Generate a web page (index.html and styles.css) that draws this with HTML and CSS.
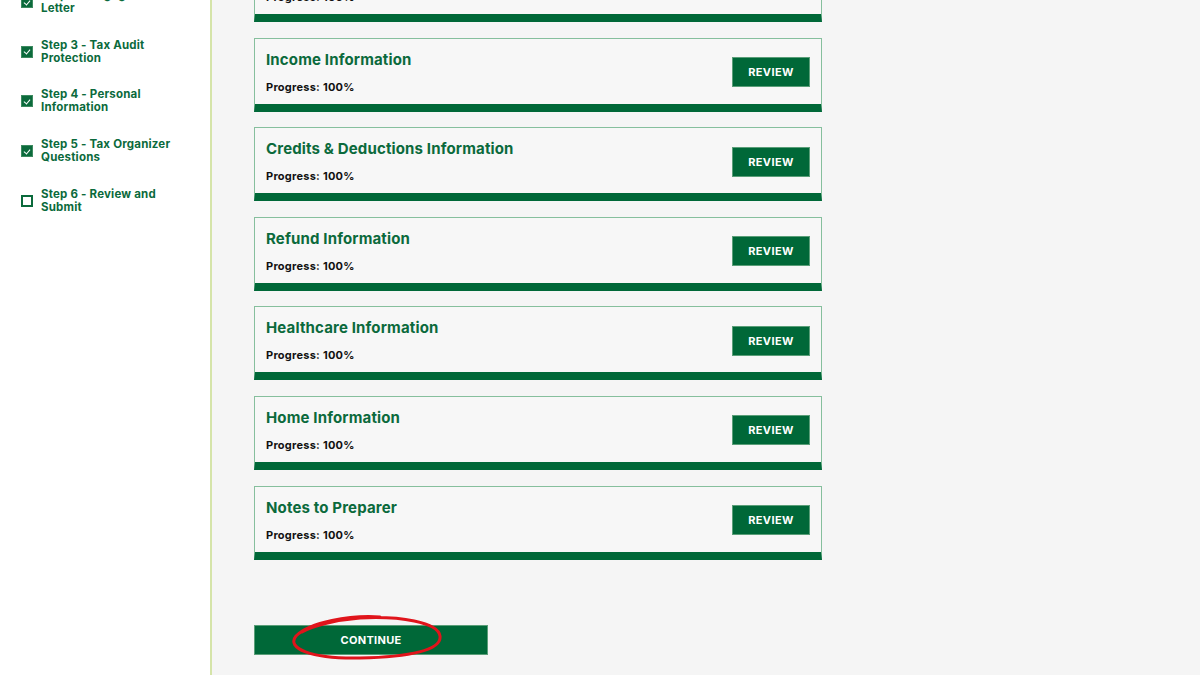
FILE: index.html
```html
<!DOCTYPE html>
<html lang="en">
<head>
    <meta charset="UTF-8">
    <meta name="viewport" content="width=device-width, initial-scale=1.0">
    <title>Tax Organizer - Review</title>
    <link rel="stylesheet" href="styles.css">
</head>
<body>
    <div class="layout">
        <aside class="sidebar">
            <ul class="steps">
                <li class="step done"><span class="box"></span><span>Step 2 - Engagement Letter</span></li>
                <li class="step done"><span class="box"></span><span>Step 3 - Tax Audit Protection</span></li>
                <li class="step done"><span class="box"></span><span>Step 4 - Personal Information</span></li>
                <li class="step done"><span class="box"></span><span>Step 5 - Tax Organizer Questions</span></li>
                <li class="step"><span class="box"></span><span>Step 6 - Review and Submit</span></li>
            </ul>
        </aside>

        <main class="content">
            <div class="section-card">
                <div class="section-info">
                    <h3>Dependent Information</h3>
                    <p>Progress: 100%</p>
                </div>
                <button class="review-btn">Review</button>
            </div>
            <div class="section-card">
                <div class="section-info">
                    <h3>Income Information</h3>
                    <p>Progress: 100%</p>
                </div>
                <button class="review-btn">Review</button>
            </div>
            <div class="section-card">
                <div class="section-info">
                    <h3>Credits &amp; Deductions Information</h3>
                    <p>Progress: 100%</p>
                </div>
                <button class="review-btn">Review</button>
            </div>
            <div class="section-card">
                <div class="section-info">
                    <h3>Refund Information</h3>
                    <p>Progress: 100%</p>
                </div>
                <button class="review-btn">Review</button>
            </div>
            <div class="section-card">
                <div class="section-info">
                    <h3>Healthcare Information</h3>
                    <p>Progress: 100%</p>
                </div>
                <button class="review-btn">Review</button>
            </div>
            <div class="section-card">
                <div class="section-info">
                    <h3>Home Information</h3>
                    <p>Progress: 100%</p>
                </div>
                <button class="review-btn">Review</button>
            </div>
            <div class="section-card">
                <div class="section-info">
                    <h3>Notes to Preparer</h3>
                    <p>Progress: 100%</p>
                </div>
                <button class="review-btn">Review</button>
            </div>

            <div class="continue-wrap">
                <button class="continue-btn">Continue</button>
                <!-- hand drawn highlight -->
                <svg class="scribble" width="160" height="50" viewBox="0 0 160 50">
                    <path d="M90 3 C60 1 20 8 6 22 C-4 34 20 45 70 44 C120 43 152 36 150 22 C148 8 110 2 70 4 C45 6 22 12 12 18"
                          fill="none" stroke="#e0141b" stroke-width="3" stroke-linecap="round"/>
                </svg>
            </div>
        </main>
    </div>
</body>
</html>
```

FILE: styles.css
```css
* {
    margin: 0;
    padding: 0;
    box-sizing: border-box;
}

body {
    background-color: #f5f5f5;
    color: #111;
    font-family: Inter, "Liberation Sans", sans-serif;
    overflow: hidden;
}

.layout {
    display: flex;
    margin-top: -60px;
    min-height: 735px;
}

.sidebar {
    width: 212px;
    flex-shrink: 0;
    background-color: #fff;
    border-right: 2px solid #d5e4a9;
    padding: 49px 0 0 21px;
}

.steps {
    list-style: none;
}

.step {
    display: flex;
    align-items: center;
    gap: 8px;
    height: 26px;
    margin-bottom: 23.7px;
    font-size: 11.5px;
    font-weight: 700;
    letter-spacing: 0.2px;
    line-height: 13px;
    color: #0b6a3c;
    padding-right: 30px;
}

.box {
    width: 12px;
    height: 12px;
    flex-shrink: 0;
    border: 2px solid #0b6a3c;
    background-color: #fff;
    position: relative;
}

.step.done .box {
    background-color: #0b6a3c;
    border: 1px solid #3d8a60;
}

.step.done .box::after {
    content: "";
    position: absolute;
    left: 3px;
    top: 1.5px;
    width: 3px;
    height: 5px;
    border: solid #fff;
    border-width: 0 1px 1px 0;
    transform: rotate(40deg);
}

.content {
    padding: 8px 0 0 42px;
}

.section-card {
    width: 568px;
    height: 74px;
    margin-bottom: 15.6px;
    background-color: #f7f7f7;
    border: 1px solid #86bf9d;
    border-bottom: 8px solid #006838;
    display: flex;
    align-items: center;
    justify-content: space-between;
    padding: 0 11px;
}

.section-info {
    padding-top: 1px;
}

.section-info h3 {
    font-size: 15px;
    font-weight: 700;
    letter-spacing: 0.15px;
    color: #0b6a3c;
    margin-bottom: 11px;
}

.section-info p {
    font-size: 11px;
    font-weight: 700;
    letter-spacing: 0.25px;
    color: #111;
}

.review-btn {
    width: 78px;
    height: 30px;
    margin-top: 2px;
    background-color: #006838;
    border: 1px solid #5a9e78;
    color: #fff;
    font-family: inherit;
    font-size: 11px;
    font-weight: 700;
    text-transform: uppercase;
    letter-spacing: 0.4px;
    cursor: pointer;
}

.continue-wrap {
    position: relative;
    margin-top: 65px;
    width: 234px;
}

.continue-btn {
    width: 234px;
    height: 30px;
    background-color: #006838;
    border: 1px solid #5a9e78;
    color: #fff;
    font-family: inherit;
    font-size: 11px;
    font-weight: 700;
    text-transform: uppercase;
    letter-spacing: 0.3px;
    cursor: pointer;
}

.scribble {
    position: absolute;
    left: 36px;
    top: -11px;
    pointer-events: none;
}
```
